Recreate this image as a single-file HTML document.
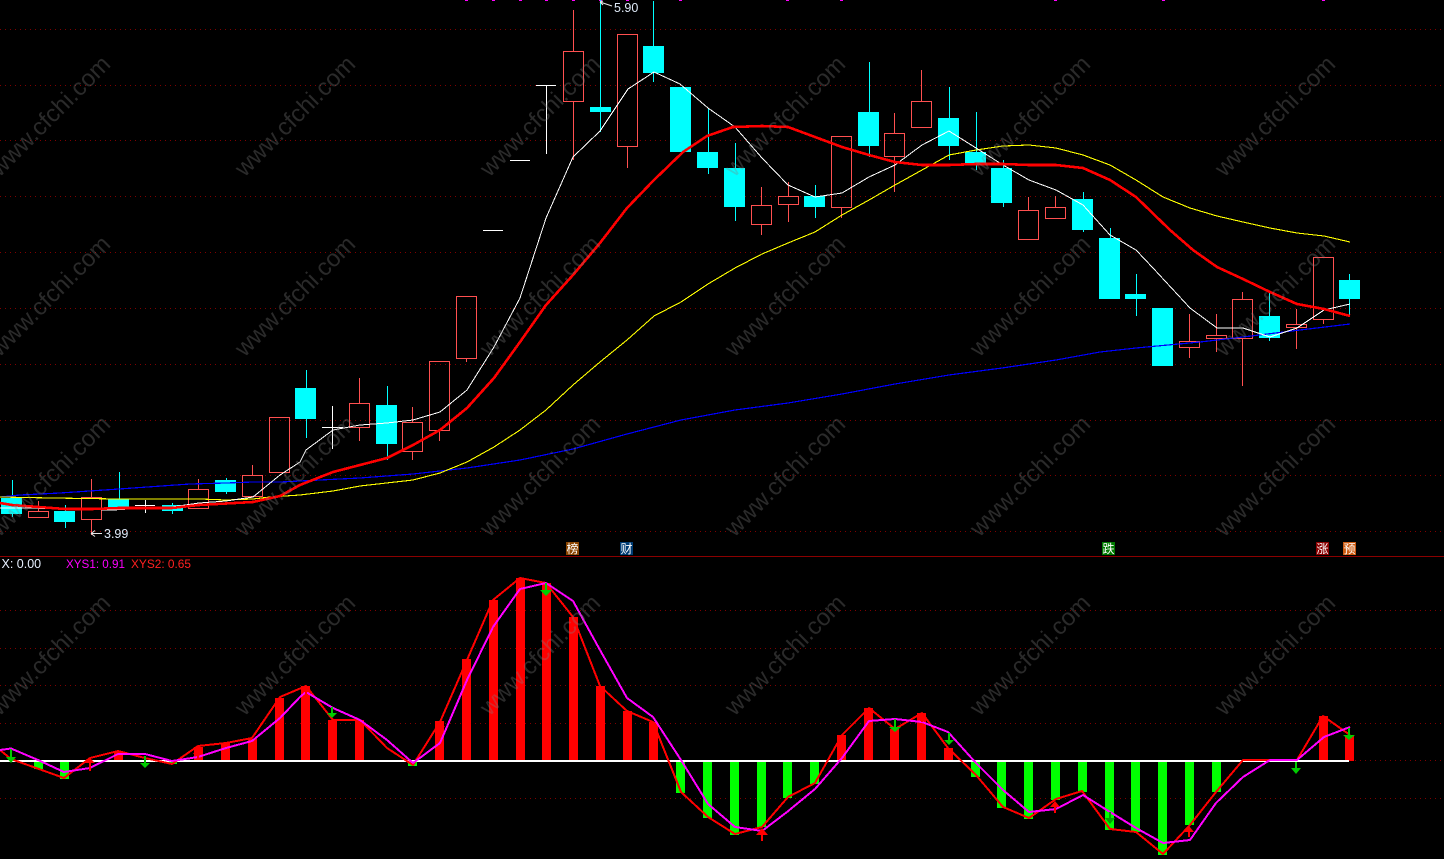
<!DOCTYPE html>
<html lang="zh">
<head>
<meta charset="utf-8">
<title>K线图</title>
<style>
html,body{margin:0;padding:0;background:#000;width:1444px;height:859px;overflow:hidden}
svg{display:block;position:absolute;left:0;top:0}
text{font-family:"Liberation Sans","WenQuanYi Zen Hei",sans-serif}
</style>
</head>
<body>
<svg width="1444" height="859" viewBox="0 0 1444 859" xmlns="http://www.w3.org/2000/svg">
<rect width="1444" height="859" fill="#000"/>

<!-- grid -->
<g stroke="#800000" stroke-width="1" stroke-dasharray="1 4" shape-rendering="crispEdges">
<path d="M0 29.5H1444M0 85.5H1444M0 140.5H1444M0 196.5H1444M0 252.5H1444M0 308.5H1444M0 364.5H1444M0 420.5H1444M0 475.5H1444M0 531.5H1444"/>
<path d="M0 610.5H1444M0 648.5H1444M0 685.5H1444M0 723.5H1444M0 760.5H1444M0 798.5H1444"/>
</g>
<path d="M0 556.5H1444" stroke="#8b0000" stroke-width="1" shape-rendering="crispEdges"/>

<!-- top magenta marks -->
<path fill="#ff00ff" d="M465 0h3v1h-3zM492 0h3v1h-3zM519 0h3v1h-3zM545 0h3v1h-3zM572 0h3v1h-3zM599 0h3v1h-3zM626 0h3v1h-3zM679 0h3v1h-3zM786 0h3v1h-3zM840 0h3v1h-3zM1054 0h3v1h-3zM1162 0h3v1h-3zM1322 0h3v1h-3z"/>

<!-- cyan candles -->
<g shape-rendering="crispEdges">
<path stroke="#00ffff" stroke-width="1" fill="none" d="M12.5 480V517M65.5 505V528M119.5 472V510M172.5 503V514M226.5 478V494M306.5 370V438M387.5 386V460M600.5 0V132M653.5 1V82M681.5 87V152M708.5 108V174M735.5 143V221M815.5 185V218M869.5 62V157M949.5 87V160M976.5 112V170M1003.5 160V207M1083.5 192V232M1110.5 228V299M1136.5 274V316M1269.5 291V341M1349.5 274V315"/>
<path fill="#00ffff" d="M1 498h21v16h-21zM54 511h21v11h-21zM108 499h21v8h-21zM162 505h21v6h-21zM215 480h21v12h-21zM295 388h21v31h-21zM376 405h21v39h-21zM590 107h21v5h-21zM643 46h21v27h-21zM670 87h21v65h-21zM697 152h21v16h-21zM724 168h21v39h-21zM804 196h21v11h-21zM858 112h21v34h-21zM938 118h21v28h-21zM965 152h21v11h-21zM991 168h21v35h-21zM1072 199h21v31h-21zM1099 238h21v61h-21zM1125 294h21v5h-21zM1152 308h21v58h-21zM1259 316h21v22h-21zM1339 280h21v19h-21z"/>
</g>

<!-- red hollow candles -->
<path shape-rendering="crispEdges" stroke="#ff5050" stroke-width="1" fill="none" d="
M38.5 501V511M28.5 511.5h20v6h-20z
M91.5 479V497M81.5 497.5h20v22h-20zM91.5 520V535
M198.5 479V489M188.5 489.5h20v19h-20z
M252.5 465V475M242.5 475.5h20v21h-20z
M279.5 417.5M269.5 417.5h20v55h-20z
M359.5 378V403M349.5 403.5h20v24h-20zM359.5 428V441
M412.5 407V422M402.5 422.5h20v29h-20zM412.5 452V460
M439.5 361.5M429.5 361.5h20v69h-20zM439.5 431V441
M466.5 296.5M456.5 296.5h20v62h-20zM466.5 359V362
M573.5 10V51M563.5 51.5h20v50h-20zM573.5 102V160
M627.5 34.5M617.5 34.5h20v112h-20zM627.5 147V168
M761.5 187V205M751.5 205.5h20v19h-20zM761.5 225V235
M788.5 182V196M778.5 196.5h20v8h-20zM788.5 205V222
M841.5 136.5M831.5 136.5h20v71h-20zM841.5 208V218
M894.5 113V133M884.5 133.5h20v23h-20zM894.5 157V192
M921.5 70V101M911.5 101.5h20v26h-20z
M1028.5 197V210M1018.5 210.5h20v29h-20z
M1055.5 196V207M1045.5 207.5h20v11h-20z
M1189.5 314V341M1179.5 341.5h20v6h-20zM1189.5 348V358
M1216.5 314V335M1206.5 335.5h20v3h-20zM1216.5 339V352
M1242.5 292V299M1232.5 299.5h20v39h-20zM1242.5 339V386
M1296.5 309V324M1286.5 324.5h20v3h-20zM1296.5 328V349
M1323.5 257.5M1313.5 257.5h20v62h-20zM1323.5 320V324"/>

<!-- white doji / dashes -->
<path shape-rendering="crispEdges" stroke="#fff" stroke-width="1" fill="none" d="
M135 505.5h20M145.5 500V513
M322 427.5h21M332.5 406V449
M483 230.5h20M510 160.5h20
M536 85.5h20M546.5 86V154"/>

<!-- MA lines -->
<g fill="none" stroke-linejoin="round" shape-rendering="crispEdges">
<polyline stroke="#0000ff" stroke-width="1.2" points="0,497 20,495 60,493 119,489 190,484 226,483 253,482 280,482 300,481 360,478 413,474 467,468 520,460 573,449 627,434 681,420 735,410 788,403 842,394 895,384 949,375 1002,368 1056,360 1100,352 1136,348 1200,342 1243,337 1300,330 1350,324"/>
<polyline stroke="#ffff00" stroke-width="1.1" points="0,497 52,498 119,499 200,499 226,500 253,499 270,497 300,495 333,491 360,486 413,480 440,473 467,462 494,447 520,430 546,410 573,385 600,362 627,340 654,316 681,302 708,284 735,268 762,254 788,243 815,232 842,215 869,200 895,185 922,170 949,155 976,150 1003,146 1029,145 1056,148 1083,155 1110,165 1136,180 1163,197 1190,208 1217,216 1243,222 1270,228 1297,233 1324,236 1350,242"/>
<polyline stroke="#ffffff" stroke-width="1" points="0,508 30,508 65,509 113,510 145,508 172,507 199,503 226,501 253,497 280,475 300,462 306,450 333,430 360,425 387,423 413,420 440,412 467,390 494,347 520,298 546,218 573,157 600,131 628,89 654,72 680,84 708,108 735,127 762,158 788,185 815,197 842,193 869,177 895,165 922,145 949,131 976,148 1003,165 1029,180 1056,190 1083,205 1110,235 1136,250 1153,268 1190,308 1217,328 1243,328 1270,337 1297,328 1324,310 1350,304"/>
<polyline stroke="#ff0000" stroke-width="2.6" points="0,503 12,505 39,507 65,509 92,509 119,508 146,508 172,508 199,505 226,503.5 253,502 280,496 300,485 333,472 360,465 387,458 413,445 440,430 467,408 494,378 520,342 546,305 573,275 600,243 627,208 654,180 683,152 707,136 733,127 762,126 788,127 815,137 842,147 869,155 895,162 922,165 949,165 976,164 1003,164 1029,165 1056,165 1083,168 1110,180 1136,197 1170,230 1193,250 1217,267 1243,279 1270,292 1297,304 1324,309 1350,316"/>
</g>

<!-- price labels -->
<path d="M600 2L612 6M600 2l3 -1M600 2l3 3M91 533.5H102M91 533.5l4 -3M91 533.5l4 3" stroke="#e8e8e8" stroke-width="1" fill="none"/>
<text x="614" y="12" font-size="12.5" fill="#dfeaf8">5.90</text>
<text x="104" y="538" font-size="12.5" fill="#dfeaf8">3.99</text>

<!-- signal badges -->
<g shape-rendering="crispEdges">
<path fill="#8b4500" d="M566 542h13v13h-13z"/>
<path fill="#003c74" d="M620 542h13v13h-13z"/>
<path fill="#007a00" d="M1102 542h13v13h-13z"/>
<path fill="#8b0000" d="M1316 542h13v13h-13z"/>
<path fill="#cc5a10" d="M1343 542h13v13h-13z"/>
</g>
<g font-size="12" fill="#fff" text-anchor="middle">
<text x="572.5" y="553">榜</text>
<text x="626.5" y="553">财</text>
<text x="1108.5" y="553">跌</text>
<text x="1322.5" y="553">涨</text>
<text x="1349.5" y="553">预</text>
</g>

<!-- indicator header -->
<text x="1.5" y="568" font-size="12.5" fill="#e8f0ff">X: 0.00</text>
<text x="66" y="568" font-size="12" fill="#ff00ff" textLength="59" lengthAdjust="spacingAndGlyphs">XYS1: 0.91</text>
<text x="131" y="568" font-size="12" fill="#ff2020" textLength="60" lengthAdjust="spacingAndGlyphs">XYS2: 0.65</text>

<!-- indicator bars -->
<g shape-rendering="crispEdges">
<path fill="#00ff00" d="M34 761h9v8h-9zM60 761h9v18h-9zM168 761h9v3h-9zM408 761h9v5h-9zM676 761h9v32h-9zM703 761h9v57h-9zM730 761h9v74h-9zM757 761h9v66h-9zM783 761h9v37h-9zM810 761h9v23h-9zM971 761h9v16h-9zM997 761h9v47h-9zM1024 761h9v58h-9zM1051 761h9v39h-9zM1078 761h9v31h-9zM1105 761h9v69h-9zM1131 761h9v71h-9zM1158 761h9v94h-9zM1185 761h9v64h-9zM1212 761h9v31h-9z"/>
<path fill="#ff0000" d="M114 751h9v9h-9zM194 747h9v13h-9zM221 743h9v17h-9zM248 739h9v21h-9zM275 698h9v62h-9zM301 686h9v74h-9zM328 720h9v40h-9zM355 720h9v40h-9zM435 721h9v39h-9zM462 659h9v101h-9zM489 600h9v160h-9zM516 578h9v182h-9zM542 583h9v177h-9zM569 617h9v143h-9zM596 686h9v74h-9zM623 711h9v49h-9zM649 722h9v38h-9zM837 735h9v25h-9zM864 708h9v52h-9zM890 729h9v31h-9zM917 713h9v47h-9zM944 748h9v12h-9zM1319 716h9v44h-9zM1345 735h9v26h-9z"/>
<path fill="#ffffff" d="M0 760h1349v2h-1349z"/>
</g>

<!-- indicator lines -->
<g fill="none" stroke-linejoin="round" shape-rendering="crispEdges" stroke-width="2">
<polyline stroke="#ff0000" points="0,750 11,759 64,778 90,758 118,751 145,758 172,764 198,746 226,743 252,738 280,697 306,686 333,720 360,720 387,748 413,765 440,722 467,660 493,600 520,578 546,583 573,617 600,686 627,711 653,722 681,792 708,817 735,834 762,827 788,797 815,783 842,735 869,708 895,729 922,713 948,748 976,775 1003,807 1029,818 1056,799 1082,791 1110,829 1136,832 1163,854 1190,825 1216,792 1243,760 1270,760 1297,760 1323,716 1350,735"/>
<polyline stroke="#ff00ff" points="0,750 11,748.5 38,760 64,772 90,768 118,754 145,754 172,761 198,757 226,748 252,741 280,718 300,697 306,692 333,708 360,720 387,740 413,763 440,743 467,680 493,627 520,589 546,583 573,601 600,650 627,698 653,717 681,760 708,804 735,827 762,831 787,812 815,789 842,758 869,721 895,719 922,722 948,732 976,763 1003,790 1029,812 1056,809 1083,795 1110,812 1136,828 1163,843 1190,840 1216,803 1243,777 1270,760 1297,760 1324,737 1350,727"/>
</g>

<!-- green down arrows -->
<g fill="#00cc00">
<path d="M10 749h2v8h4l-5 6-5-6h4z"/>
<path d="M144 756h2v7h4l-5 5-5-5h4z"/>
<path d="M331 707h2v6h4l-5 5-5-5h4z"/>
<path d="M545 583h2v7h5l-6 6-6-6h5z"/>
<path d="M894 719h2v8h5l-6 5-6-5h5z"/>
<path d="M948 733h2v7h4l-5 5-5-5h4z"/>
<path d="M1109 812h2v6h4l-5 6-5-6h4z" fill="#00a000"/>
<path d="M1295 762h2v6h4l-5 6-5-6h4z"/>
<path d="M1348 728h2v7h5l-6 5-6-5h5z"/>
</g>
<!-- red up arrows -->
<g fill="#ff0000">
<path d="M90 758l5 5h-4v8h-2v-8h-4z"/>
<path d="M198 747l5 7h-4v4h-2v-4h-4z"/>
<path d="M306 686l5 6h-4v8h-2v-8h-4z"/>
<path d="M440 721l5 6h-4v6h-2v-6h-4z"/>
<path d="M762 828l6 7h-5v6h-2v-6h-5z"/>
<path d="M869 708l5 5h-4v4h-2v-4h-4z"/>
<path d="M922 713l5 5h-4v4h-2v-4h-4z"/>
<path d="M1055 801l5 6h-4v6h-2v-6h-4z"/>
<path d="M1189 826l5 6h-4v5h-2v-5h-4z"/>
<path d="M1323 716l5 5h-4v3h-2v-3h-4z"/>
</g>

<!-- watermark -->
<g font-size="24" fill="#808080" fill-opacity="0.33" text-anchor="middle">
<text transform="translate(50,116) rotate(-45)" y="8">www.cfchi.com</text>
<text transform="translate(295,116) rotate(-45)" y="8">www.cfchi.com</text>
<text transform="translate(540,116) rotate(-45)" y="8">www.cfchi.com</text>
<text transform="translate(785,116) rotate(-45)" y="8">www.cfchi.com</text>
<text transform="translate(1030,116) rotate(-45)" y="8">www.cfchi.com</text>
<text transform="translate(1275,116) rotate(-45)" y="8">www.cfchi.com</text>
<text transform="translate(50,296) rotate(-45)" y="8">www.cfchi.com</text>
<text transform="translate(295,296) rotate(-45)" y="8">www.cfchi.com</text>
<text transform="translate(540,296) rotate(-45)" y="8">www.cfchi.com</text>
<text transform="translate(785,296) rotate(-45)" y="8">www.cfchi.com</text>
<text transform="translate(1030,296) rotate(-45)" y="8">www.cfchi.com</text>
<text transform="translate(1275,296) rotate(-45)" y="8">www.cfchi.com</text>
<text transform="translate(50,476) rotate(-45)" y="8">www.cfchi.com</text>
<text transform="translate(295,476) rotate(-45)" y="8">www.cfchi.com</text>
<text transform="translate(540,476) rotate(-45)" y="8">www.cfchi.com</text>
<text transform="translate(785,476) rotate(-45)" y="8">www.cfchi.com</text>
<text transform="translate(1030,476) rotate(-45)" y="8">www.cfchi.com</text>
<text transform="translate(1275,476) rotate(-45)" y="8">www.cfchi.com</text>
<text transform="translate(50,655) rotate(-45)" y="8">www.cfchi.com</text>
<text transform="translate(295,655) rotate(-45)" y="8">www.cfchi.com</text>
<text transform="translate(540,655) rotate(-45)" y="8">www.cfchi.com</text>
<text transform="translate(785,655) rotate(-45)" y="8">www.cfchi.com</text>
<text transform="translate(1030,655) rotate(-45)" y="8">www.cfchi.com</text>
<text transform="translate(1275,655) rotate(-45)" y="8">www.cfchi.com</text>
</g>
</svg>
</body>
</html>
